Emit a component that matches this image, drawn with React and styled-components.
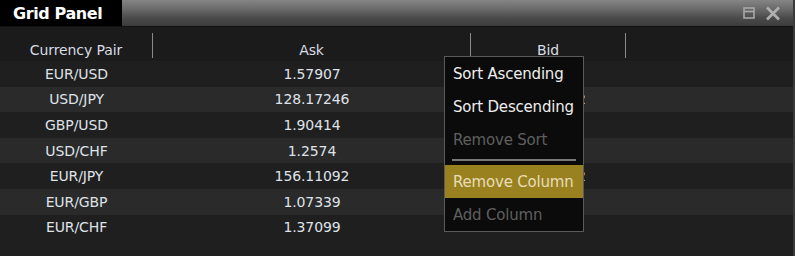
import styled, { createGlobalStyle } from 'styled-components'

const GlobalStyle = createGlobalStyle`
  html, body {
    margin: 0;
    padding: 0;
    background: #1f1f1f;
  }
  body {
    font-family: "DejaVu Sans", Verdana, sans-serif;
  }
`

const Panel = styled.div`
  position: relative;
  width: 793px;
  height: 256px;
  background: #1f1f1f;
  border-right: 2px solid #3a3a3a;
  display: flex;
  flex-direction: column;
  overflow: hidden;
`

const TitleBar = styled.div`
  height: 26px;
  display: flex;
  background: linear-gradient(#858585 0%, #6a6a6a 35%, #4a4a4a 70%, #3c3c3c 100%);
  border-bottom: 1px solid #111;
  flex-shrink: 0;
`

const Tab = styled.div`
  width: 122px;
  background: #000;
  color: #fff;
  font-weight: bold;
  font-size: 16px;
  letter-spacing: -0.4px;
  padding-left: 13px;
  box-sizing: border-box;
  display: flex;
  align-items: center;
`

const Spacer = styled.div`
  flex: 1;
`

const Tools = styled.div`
  display: flex;
  align-items: center;
  gap: 10px;
  padding-right: 12px;
`

const Header = styled.div`
  display: flex;
  height: 34px;
  background: #1b1b1b;
  flex-shrink: 0;
`

const HeadCell = styled.div`
  width: ${p => p.$w}px;
  color: #d8dce4;
  font-size: 14px;
  letter-spacing: -0.1px;
  text-align: center;
  line-height: 14px;
  box-sizing: border-box;
  border-right: ${p => (p.$sep ? '1px solid #8a8a8a' : 'none')};
  margin: ${p => (p.$sep ? '6px 0 3px' : '0')};
  padding-top: ${p => (p.$sep ? '10px' : '16px')};
`

const Rows = styled.div`
  display: flex;
  flex-direction: column;
`

const Row = styled.div`
  display: flex;
  height: 25.6px;
  align-items: center;
  background: ${p => (p.$odd ? '#2a2a2a' : '#1f1f1f')};
`

const Cell = styled.div`
  width: ${p => p.$w}px;
  text-align: center;
  color: #dfe2e8;
  font-size: 14px;
  letter-spacing: -0.1px;
`

const Menu = styled.div`
  position: absolute;
  left: 444px;
  top: 56px;
  width: 140px;
  height: 176px;
  background: #0b0b0b;
  border: 1px solid #5a5a5a;
  box-sizing: border-box;
  display: flex;
  flex-direction: column;
`

const MenuItem = styled.div`
  height: 33px;
  flex-shrink: 0;
  display: flex;
  align-items: center;
  padding-left: 8px;
  font-size: 15px;
  letter-spacing: -0.2px;
  background: ${p => (p.$active ? '#9a8120' : 'transparent')};
  color: ${p => (p.$active ? '#e6ddb8' : p.$disabled ? '#5f5f5f' : '#eeeeee')};
`

const Separator = styled.div`
  height: 2px;
  flex-shrink: 0;
  margin: 3px 7px 4px;
  background: #7a7a7a;
`

const cols = [153, 318, 155, 167]

const data = [
  ['EUR/USD', '1.57907', '1.57916'],
  ['USD/JPY', '128.17246', '128.17252'],
  ['GBP/USD', '1.90414', '1.90429'],
  ['USD/CHF', '1.2574', '1.25751'],
  ['EUR/JPY', '156.11092', '156.11102'],
  ['EUR/GBP', '1.07339', '1.07348'],
  ['EUR/CHF', '1.37099', '1.24055'],
]

const App = () => {
  return (
    <>
      <GlobalStyle />
      <Panel>
        <TitleBar>
          <Tab>Grid Panel</Tab>
          <Spacer />
          <Tools>
            <svg width="12" height="12" viewBox="0 0 12 12">
              <rect x="1" y="1" width="10" height="10" fill="none" stroke="#a8a8a8" strokeWidth="1.6" />
              <line x1="1" y1="4.5" x2="11" y2="4.5" stroke="#a8a8a8" strokeWidth="1.6" />
            </svg>
            <svg width="16" height="15" viewBox="0 0 16 15">
              <path d="M2 1.5 L14 13.5 M14 1.5 L2 13.5" stroke="#b0b0b0" strokeWidth="2.6" />
            </svg>
          </Tools>
        </TitleBar>
        <Header>
          <HeadCell $w={cols[0]} $sep>Currency Pair</HeadCell>
          <HeadCell $w={cols[1]} $sep>Ask</HeadCell>
          <HeadCell $w={cols[2]} $sep>Bid</HeadCell>
          <HeadCell $w={cols[3]} />
        </Header>
        <Rows>
          {data.map((r, i) => (
            <Row key={r[0]} $odd={i % 2 === 1}>
              <Cell $w={cols[0]}>{r[0]}</Cell>
              <Cell $w={cols[1]}>{r[1]}</Cell>
              <Cell $w={cols[2]}>{r[2]}</Cell>
              <Cell $w={cols[3]} />
            </Row>
          ))}
        </Rows>
        <Menu>
          <MenuItem>Sort Ascending</MenuItem>
          <MenuItem>Sort Descending</MenuItem>
          <MenuItem $disabled>Remove Sort</MenuItem>
          <Separator />
          <MenuItem $active>Remove Column</MenuItem>
          <MenuItem $disabled>Add Column</MenuItem>
        </Menu>
      </Panel>
    </>
  )
}

export default App
